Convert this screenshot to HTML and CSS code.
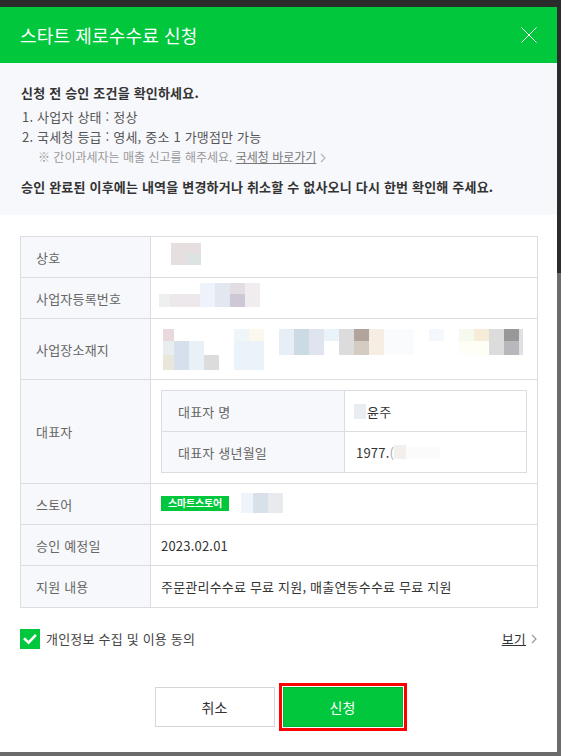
FILE: index.html
```html
<!DOCTYPE html>
<html lang="ko">
<head>
<meta charset="utf-8">
<title>스타트 제로수수료 신청</title>
<link rel="stylesheet" href="styles.css">
</head>
<body>
<div class="modal">
  <header class="modal-header">
    <h1 class="modal-title">스타트 제로수수료 신청</h1>
    <button class="close-btn" type="button" aria-label="닫기">
      <svg width="16" height="16" viewBox="0 0 16 16"><path d="M0.5 0.5L15.5 15.5M15.5 0.5L0.5 15.5" stroke="#fff" stroke-width="1" fill="none"/></svg>
    </button>
  </header>

  <section class="notice">
    <p class="notice-title">신청 전 승인 조건을 확인하세요.</p>
    <ol class="notice-list">
      <li>1. 사업자 상태 : 정상</li>
      <li>2. 국세청 등급 : 영세, 중소 1 가맹점만 가능</li>
    </ol>
    <p class="notice-sub">※ 간이과세자는 매출 신고를 해주세요. <a class="link">국세청 바로가기</a><svg class="chev" width="6" height="10" viewBox="0 0 6 10"><path d="M1 1L5 5L1 9" stroke="#b4b4b4" stroke-width="1.2" fill="none"/></svg></p>
    <p class="notice-warn">승인 완료된 이후에는 내역을 변경하거나 취소할 수 없사오니 다시 한번 확인해 주세요.</p>
  </section>

  <div class="info-table">
    <div class="th">상호</div>
    <div class="td"><span class="blur blur-name"></span></div>

    <div class="th">사업자등록번호</div>
    <div class="td"><span class="blur blur-bizno"></span></div>

    <div class="th row-tall">사업장소재지</div>
    <div class="td row-tall"><span class="blur blur-addr"></span></div>

    <div class="th row-ceo">대표자</div>
    <div class="td row-ceo">
      <div class="inner-table">
        <div class="ith">대표자 명</div>
        <div class="itd"><span class="blur blur-ceo"></span>윤주</div>
        <div class="ith">대표자 생년월일</div>
        <div class="itd">1977.<span class="faint">(</span><span class="blur blur-birth"></span></div>
      </div>
    </div>

    <div class="th">스토어</div>
    <div class="td"><span class="badge">스마트스토어</span><span class="blur blur-store"></span></div>

    <div class="th">승인 예정일</div>
    <div class="td">2023.02.01</div>

    <div class="th row-last">지원 내용</div>
    <div class="td row-last">주문관리수수료 무료 지원, 매출연동수수료 무료 지원</div>
  </div>

  <div class="agree-row">
    <label class="agree">
      <span class="checkbox"><svg width="20" height="20" viewBox="0 0 20 20"><path d="M5 10.2L8.6 13.6L15 6.8" stroke="#fff" stroke-width="2.6" fill="none" stroke-linecap="square"/></svg></span>
      <span class="agree-text">개인정보 수집 및 이용 동의</span>
    </label>
    <a class="view-link"><span class="view-text">보기</span><svg class="chev" width="6" height="10" viewBox="0 0 6 10"><path d="M1 1L5 5L1 9" stroke="#999" stroke-width="1.2" fill="none"/></svg></a>
  </div>

  <div class="btn-row">
    <button class="btn btn-cancel" type="button">취소</button>
    <button class="btn btn-apply" type="button">신청</button>
  </div>
</div>
</body>
</html>
```

FILE: styles.css
```css
* {
  box-sizing: border-box;
  margin: 0;
  padding: 0;
}

html, body {
  width: 561px;
  height: 756px;
  overflow: hidden;
}

body {
  background: linear-gradient(to bottom, #2b2b2b 0, #2b2b2b 273px, #6b6b6b 273px);
  font-family: "Noto Sans CJK KR", "Noto Sans", sans-serif;
  color: #333;
  padding-top: 7px;
}

.modal {
  width: 557px;
  height: 745px;
  background: #fff;
  display: flex;
  flex-direction: column;
}

/* header */
.modal-header {
  height: 56px;
  flex: none;
  background: #00c73c;
  display: flex;
  align-items: center;
  justify-content: space-between;
  padding: 0 20px 0 20px;
}

.modal-title {
  font-size: 18px;
  font-weight: 400;
  color: #fff;
  line-height: 1;
  letter-spacing: 0.15px;
}

.close-btn {
  width: 16px;
  height: 16px;
  background: none;
  border: 0;
  display: block;
}

.close-btn svg {
  display: block;
}

/* notice */
.notice {
  background: #f7f8fc;
  padding: 20px 20px 18px 21px;
  font-size: 13px;
  letter-spacing: 0.2px;
}

.notice-title {
  font-weight: 700;
  line-height: 20px;
  color: #333;
}

.notice-list {
  list-style: none;
  margin-top: 4px;
  padding-left: 1px;
  color: #555;
}

.notice-list li {
  line-height: 20px;
}

.notice-sub {
  padding-left: 17px;
  font-size: 12px;
  line-height: 19px;
  color: #999;
  letter-spacing: 0;
}

.notice-sub .link {
  color: #777;
  text-decoration: underline;
}

.chev {
  display: inline-block;
  vertical-align: -1px;
  margin-left: 4px;
}

.notice-warn {
  margin-top: 11px;
  font-weight: 700;
  line-height: 20px;
  color: #333;
}

/* info table */
.info-table {
  margin: 21px 0 0 20px;
  width: 518px;
  display: grid;
  grid-template-columns: 130px 387px;
  border-top: 1px solid #dcdde3;
  border-left: 1px solid #dcdde3;
  font-size: 13px;
  letter-spacing: 0.2px;
}

.th,
.td {
  height: 41px;
  display: flex;
  align-items: center;
  border-right: 1px solid #dcdde3;
  border-bottom: 1px solid #dcdde3;
}

.th {
  background: #f7f8fb;
  color: #666;
  padding-left: 15px;
}

.td {
  padding-left: 10px;
  color: #333;
}

.row-tall {
  height: 61px;
}

.row-ceo {
  height: 104px;
}

.row-last {
  height: 42px;
}

.inner-table {
  width: 366px;
  display: grid;
  grid-template-columns: 183px 182px;
  border-top: 1px solid #dcdde3;
  border-left: 1px solid #dcdde3;
}

.ith,
.itd {
  height: 41px;
  display: flex;
  align-items: center;
  border-right: 1px solid #dcdde3;
  border-bottom: 1px solid #dcdde3;
}

.ith {
  background: #f7f8fb;
  color: #666;
  padding-left: 16px;
}

.itd {
  padding-left: 11px;
  color: #333;
}

.faint {
  color: #aaa;
}

/* pixelated (masked) values */
.blur {
  display: inline-block;
  flex: none;
}

.blur-name {
  width: 30px;
  height: 22px;
  margin-left: 10px;
  margin-bottom: 7px;
  background:
    linear-gradient(#e6dfe0, #e6dfe0) 0 0 / 30px 11px no-repeat,
    linear-gradient(#e5dfe0, #e5dfe0) 0 11px / 15px 11px no-repeat,
    linear-gradient(#dde2e2, #dde2e2) 15px 11px / 15px 11px no-repeat;
}

.blur-bizno {
  width: 101px;
  height: 24px;
  margin-left: -2px;
  margin-bottom: 7px;
  background:
    linear-gradient(#eef0f0, #eef0f0) 0 11px / 11px 13px no-repeat,
    linear-gradient(#ece8ec, #ece8ec) 11px 11px / 30px 13px no-repeat,
    linear-gradient(#eef3fb, #eef3fb) 41px 0 / 15px 24px no-repeat,
    linear-gradient(#e3e8f0, #e3e8f0) 56px 0 / 15px 24px no-repeat,
    linear-gradient(#e3dde3, #e3dde3) 71px 0 / 15px 11px no-repeat,
    linear-gradient(#cdc8d6, #cdc8d6) 71px 11px / 15px 13px no-repeat,
    linear-gradient(#f0ecef, #f0ecef) 86px 0 / 15px 24px no-repeat;
}

.blur-addr {
  width: 363px;
  height: 41px;
  margin-left: -1px;
  background:
    linear-gradient(#ead9dc, #ead9dc) 3px 0 / 11px 12px no-repeat,
    linear-gradient(#e8eded, #e8eded) 3px 12px / 11px 14px no-repeat,
    linear-gradient(#e9e6dc, #e9e6dc) 3px 26px / 11px 15px no-repeat,
    linear-gradient(#d6e0ec, #d6e0ec) 14px 12px / 15px 29px no-repeat,
    linear-gradient(#e8f0f8, #e8f0f8) 29px 12px / 15px 29px no-repeat,
    linear-gradient(#dcdcdc, #dcdcdc) 44px 26px / 15px 15px no-repeat,
    linear-gradient(#eef6f8, #eef6f8) 74px 0 / 15px 12px no-repeat,
    linear-gradient(#fdf8ee, #fdf8ee) 89px 0 / 15px 12px no-repeat,
    linear-gradient(#eaf2fa, #eaf2fa) 74px 12px / 30px 29px no-repeat,
    linear-gradient(#e8eef6, #e8eef6) 119px 0 / 15px 26px no-repeat,
    linear-gradient(#ccdae4, #ccdae4) 134px 0 / 15px 26px no-repeat,
    linear-gradient(#e0e4ee, #e0e4ee) 149px 0 / 15px 26px no-repeat,
    linear-gradient(#eaf2fa, #eaf2fa) 164px 0 / 15px 12px no-repeat,
    linear-gradient(#dcdcdc, #dcdcdc) 179px 0 / 15px 26px no-repeat,
    linear-gradient(#b0a49c, #b0a49c) 194px 0 / 15px 12px no-repeat,
    linear-gradient(#d4cbc2, #d4cbc2) 194px 12px / 15px 14px no-repeat,
    linear-gradient(#f6eee2, #f6eee2) 209px 0 / 15px 26px no-repeat,
    linear-gradient(#fafbfd, #fafbfd) 224px 0 / 30px 26px no-repeat,
    linear-gradient(#f4f8fd, #f4f8fd) 269px 0 / 15px 12px no-repeat,
    linear-gradient(#f6faee, #f6faee) 299px 0 / 15px 12px no-repeat,
    linear-gradient(#f6ecd8, #f6ecd8) 314px 0 / 15px 12px no-repeat,
    linear-gradient(#fefef6, #fefef6) 299px 12px / 30px 14px no-repeat,
    linear-gradient(#dcdcdc, #dcdcdc) 329px 0 / 15px 26px no-repeat,
    linear-gradient(#989898, #989898) 344px 0 / 15px 12px no-repeat,
    linear-gradient(#b8b8bc, #b8b8bc) 344px 12px / 15px 14px no-repeat,
    linear-gradient(#e0e0e4, #e0e0e4) 359px 0 / 4px 26px no-repeat;
}

.blur-ceo {
  width: 12px;
  height: 15px;
  margin-left: -2px;
  margin-right: 1px;
  background: #e9ecf1;
}

.blur-birth {
  width: 46px;
  height: 14px;
  background:
    linear-gradient(#f3efea, #f3efea) 0 0 / 12px 14px no-repeat,
    linear-gradient(#fbfbfb, #fbfbfb) 12px 2px / 34px 12px no-repeat;
}

.blur-store {
  width: 42px;
  height: 20px;
  margin-left: 12px;
  margin-bottom: 3px;
  background:
    linear-gradient(#eef4fa, #eef4fa) 0 0 / 12px 20px no-repeat,
    linear-gradient(#d8e0ea, #d8e0ea) 12px 0 / 15px 20px no-repeat,
    linear-gradient(#e8eaee, #e8eaee) 27px 0 / 15px 20px no-repeat;
}

.badge {
  display: inline-flex;
  align-items: center;
  justify-content: center;
  width: 68px;
  height: 15px;
  background: #00c73c;
  color: #fff;
  font-size: 10px;
  font-weight: 700;
  letter-spacing: -0.2px;
  line-height: 1;
  margin-bottom: 2px;
}

/* agreement */
.agree-row {
  margin-top: 21px;
  padding: 0 20px;
  height: 20px;
  display: flex;
  align-items: center;
  justify-content: space-between;
  font-size: 13px;
  letter-spacing: 0.2px;
}

.agree {
  display: flex;
  align-items: center;
  gap: 6px;
}

.checkbox {
  width: 20px;
  height: 20px;
  background: #00c73c;
  display: block;
}

.checkbox svg {
  display: block;
}

.agree-text {
  color: #444;
  line-height: 20px;
}

.view-link {
  display: flex;
  align-items: center;
  color: #333;
}

.view-text {
  text-decoration: underline;
  line-height: 20px;
}

.view-link .chev {
  margin-left: 5px;
  vertical-align: 0;
}

/* buttons */
.btn-row {
  margin-top: 38px;
  display: flex;
  justify-content: center;
  gap: 8px;
}

.btn {
  width: 120px;
  height: 40px;
  font-family: inherit;
  font-size: 14px;
  cursor: pointer;
}

.btn-cancel {
  background: #fff;
  border: 1px solid #d5d6dc;
  color: #333;
}

.btn-apply {
  background: #00c73c;
  border: 1px solid #00b336;
  color: #fff;
  outline: 3px solid #ff0000;
  outline-offset: 1px;
}
```
